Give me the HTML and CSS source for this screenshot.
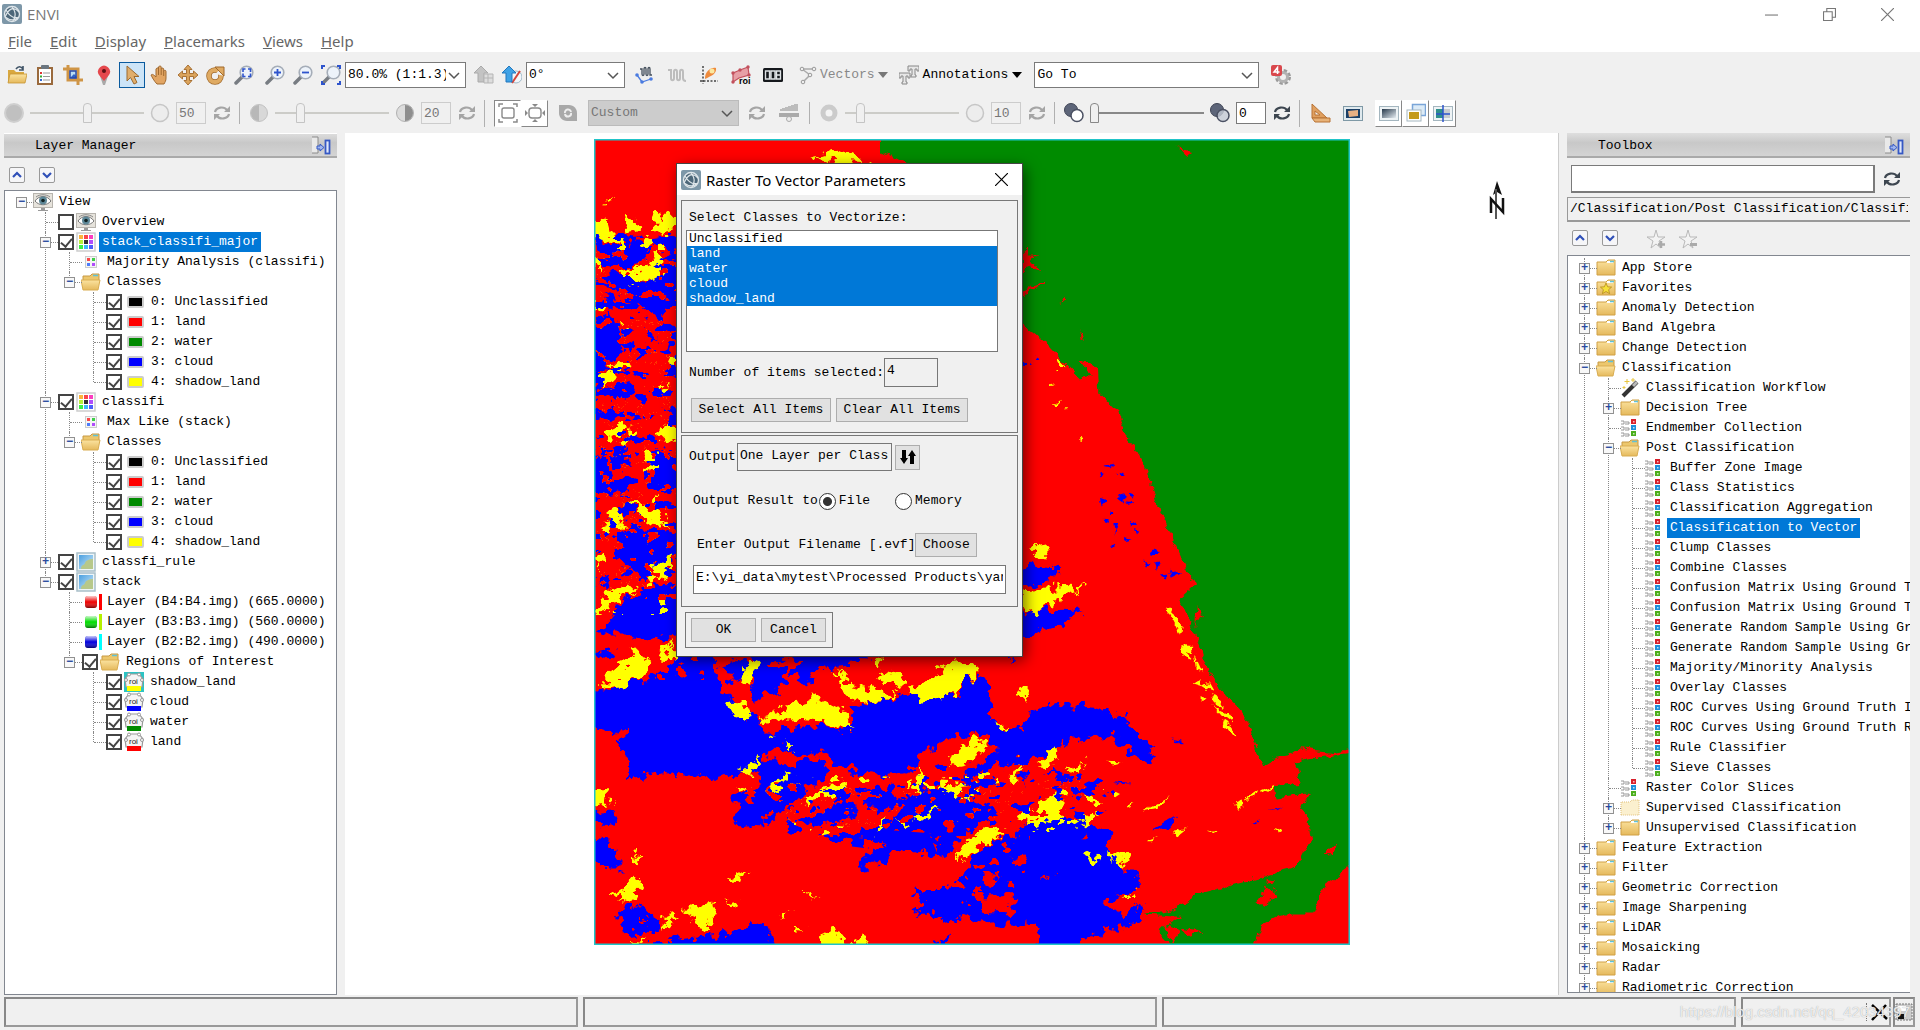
FILE: index.html
```html
<!DOCTYPE html>
<html lang="en">
<head>
<meta charset="utf-8">
<title>ENVI</title>
<link rel="stylesheet" href="styles.css">
</head>
<body>
<svg class="defs" aria-hidden="true">
  <defs>
    <linearGradient id="gold" x1="0" y1="0" x2="0" y2="1"><stop offset="0" stop-color="#fbe3a0"/><stop offset="1" stop-color="#e5b95c"/></linearGradient>
    <linearGradient id="sky" x1="0" y1="0" x2="1" y2="1"><stop offset="0" stop-color="#4a9fe0"/><stop offset="1" stop-color="#cfeaf8"/></linearGradient>
    <linearGradient id="dusk" x1="0" y1="0" x2="1" y2="1"><stop offset="0" stop-color="#26384a"/><stop offset="1" stop-color="#e6edf2"/></linearGradient>
    <linearGradient id="ball" x1="0" y1="0" x2="0" y2="1"><stop offset="0" stop-color="#fff" stop-opacity=".8"/><stop offset=".5" stop-color="#fff" stop-opacity="0"/><stop offset="1" stop-color="#000" stop-opacity=".5"/></linearGradient>
  </defs>
  <symbol id="logo" viewBox="0 0 20 20"><rect width="20" height="20" rx="2" fill="#7d97a8"/><circle cx="10" cy="10" r="7.500" fill="#4d6779" stroke="#dfe6ea" stroke-width="1.300"/><path d="M3 13C7 4 12 2 17 8M4 6c4 7 8 9 13 7M10 3c4 5 4 10 1 14M3 13c4 3 9 4 13 1" fill="none" stroke="#dfe6ea" stroke-width="1.200"/></symbol>
  <symbol id="open" viewBox="0 0 20 20"><path d="M1 17V5h6l2 2h8v10z" fill="#d9a83f"/><path d="M1 18l2-9h17l-2 9z" fill="url(#gold)" stroke="#c79534" stroke-width=".8"/><path d="M9 4c2-3 5-3 7 0M16 1v4h-4" fill="none" stroke="#3f5366" stroke-width="1.600"/></symbol>
  <symbol id="clip" viewBox="0 0 20 20"><rect x="2" y="2" width="16" height="18" fill="#9a6a3d"/><rect x="4" y="4" width="12" height="14" fill="#fff"/><rect x="6" y="0" width="8" height="4" rx="1" fill="#6b7680"/><path d="M8 8h7M8 11.500h7M8 15h7" stroke="#999"/><path d="M5 8h2" stroke="#d33" stroke-width="2"/><path d="M5 11.500h2" stroke="#3a3" stroke-width="2"/><path d="M5 15h2" stroke="#36c" stroke-width="2"/></symbol>
  <symbol id="crop" viewBox="0 0 20 20"><rect x="6" y="5" width="10" height="10" fill="#b9dcf3"/><path d="M7 13l4-4 5 5z" fill="#2e62c8"/><path d="M0 4h15v16M5 0v15h15" fill="none" stroke="#cf9546" stroke-width="3"/><path d="M7 6h6v7H7z" fill="none" stroke="#2948a8" stroke-width="1.500"/></symbol>
  <symbol id="pin" viewBox="0 0 20 20"><path d="M9 20L6 11h8l-3 9z" fill="#a9a9a9"/><path d="M10 16L5 10a6 6 0 1 1 10 0z" fill="#e5484d"/><circle cx="10" cy="6" r="2" fill="#5c1013"/></symbol>
  <symbol id="cursor" viewBox="0 0 20 20"><path d="M5 1v15l3.500-3.500L12 19l3-1.500-3-6h5z" fill="#e0ae6c" stroke="#9b6a30"/></symbol>
  <symbol id="hand" viewBox="0 0 20 20"><path d="M7 19C4 16 2 12 1 10c1-1 2-1 5 2V4c1-1.500 2-1.500 2.500 0V2c1-1.500 2.200-1.500 2.700 0v2c1-1.500 2.200-1 2.500 0v2c1-1 2.300-.8 2.300.5V13c0 3-1 4-2 6z" fill="#e2a563" stroke="#a06a30"/><path d="M8.500 4v6M11.200 4v6M13.700 6v5" stroke="#a06a30"/></symbol>
  <symbol id="move" viewBox="0 0 20 20"><path d="M10 0l4 4.500h-2.500v4h4V6L20 10l-4.500 4v-2.500h-4v4H14L10 20l-4-4.500h2.500v-4h-4V14L0 10l4.500-4v2.500h4v-4H6z" fill="#dba45c" stroke="#a1692a" stroke-width=".9"/></symbol>
  <symbol id="rotate" viewBox="0 0 20 20"><circle cx="9" cy="11" r="6" fill="none" stroke="#a1692a" stroke-width="5.500"/><circle cx="9" cy="11" r="6" fill="none" stroke="#dfaa62" stroke-width="4"/><path d="M9 9L19 0v11z" fill="#efefef"/><path d="M9 2h9v9z" fill="#dfaa62" stroke="#a1692a"/></symbol>
  <symbol id="lens" viewBox="0 0 20 20"><path d="M8 12l-6 6" stroke="#777c82" stroke-width="3.500" stroke-linecap="round"/><circle cx="12.500" cy="7.500" r="6.300" fill="#edf3fa" stroke="#a5adb8" stroke-width="1.600"/></symbol>
  <symbol id="zsel" viewBox="0 0 20 20"><use href="#lens"/><path d="M9 7V4h2.500M14 4h2.500v3M16.500 8.500v3H14M11.500 11.500H9v-3" fill="none" stroke="#2e54cc" stroke-width="1.600"/></symbol>
  <symbol id="zin" viewBox="0 0 20 20"><use href="#lens"/><path d="M9 7.500h7M12.500 4v7" stroke="#2e54cc" stroke-width="1.800"/></symbol>
  <symbol id="zout" viewBox="0 0 20 20"><use href="#lens"/><path d="M9 7.500h7" stroke="#2e54cc" stroke-width="1.800"/></symbol>
  <symbol id="zfit" viewBox="0 0 20 20"><use href="#lens"/><path d="M1 4V1h3M16 1h3v3M19 16v3h-3M4 19H1v-3" fill="none" stroke="#2e54cc" stroke-width="2"/></symbol>
  <symbol id="upgray" viewBox="0 0 20 20"><path d="M7 1l7 7h-4v9H4V8H0z" fill="#c3c3c3" stroke="#aaa"/><path d="M10 9h9v9h-9zM10 13h9M14 9v9" fill="#ddd" stroke="#b5b5b5"/></symbol>
  <symbol id="upblue" viewBox="0 0 20 20"><circle cx="14" cy="12" r="6" fill="#f3f7fa" stroke="#9fb9c9"/><path d="M10 18l8-12" stroke="#d4453a" stroke-width="2"/><path d="M7 1l7 7h-4v9H4V8H0z" fill="#3fa2e6" stroke="#2277bd"/></symbol>
  <symbol id="spec" viewBox="0 0 20 20"><path d="M5 4h2v5c0 2 2 2 2 0V4c0-2 2-2 2 0v5c0 2 2 2 2 0V4c0-2 2-2 2 0v6h2" fill="none" stroke="#444f5c" stroke-width="1.300"/><path d="M2 10l5 7 9-3" fill="none" stroke="#4a7be0" stroke-width="1.300"/><circle cx="2" cy="10" r="1.800" fill="#4a7be0"/><circle cx="7" cy="17" r="1.800" fill="#4a7be0"/><circle cx="16" cy="14" r="1.800" fill="#4a7be0"/></symbol>
  <symbol id="wave" viewBox="0 0 20 20"><path d="M1 5h3v8c0 3 3 3 3 0V7c0-3 3-3 3 0v6c0 3 3 3 3 0V7c0-3 3-3 3 0v6c0 2 1 3 3 3" fill="none" stroke="#bdbdbd" stroke-width="2"/></symbol>
  <symbol id="scat" viewBox="0 0 20 20"><path d="M4 1v18M1 16h18" stroke="#444" stroke-width="1.500" stroke-dasharray="2 1.500"/><path d="M6 14c0-8 6-12 11-11 1 6-5 8-11 11z" fill="#ee8a3c"/><circle cx="13" cy="6" r="2.500" fill="#fbe8a0"/></symbol>
  <symbol id="roi" viewBox="0 0 20 20"><path d="M2 8L9 5 17 2l1 8-10 3-6 4z" fill="#e7a0a6" stroke="#c2505c" stroke-width="1.200"/><g fill="#c2505c"><circle cx="2" cy="8" r="1.700"/><circle cx="9" cy="5" r="1.700"/><circle cx="17" cy="2" r="1.700"/><circle cx="18" cy="10" r="1.700"/><circle cx="2" cy="17" r="1.700"/></g></symbol>
  <symbol id="dn" viewBox="0 0 20 20"><rect y="3" width="20" height="14" rx="1.500" fill="#15181c"/><path d="M2.500 6h4v8h-4zM8 6h4v8H8zM13.500 6h4v8h-4zM13.500 10h4" fill="none" stroke="#dfe3e6" stroke-width="1.400"/></symbol>
  <symbol id="vect" viewBox="0 0 20 20"><path d="M4 4l8 6-7 7M4 4h13" fill="none" stroke="#aaa" stroke-width="1.500"/><g fill="#eee" stroke="#999"><circle cx="4" cy="4" r="1.800"/><circle cx="16" cy="4" r="1.800"/><circle cx="12" cy="10" r="1.800"/><circle cx="5" cy="17" r="1.800"/></g></symbol>
  <symbol id="anno" viewBox="0 0 20 20"><path d="M9 1h11v5h-2V4h-2v6h1v2h-5v-2h1V4h-2v2H9zM0 8h11v5H9v-2H7v6h1v2H3v-2h1v-6H2v2H0z" fill="#e7e7e7" stroke="#888"/></symbol>
  <symbol id="gear" viewBox="0 0 20 20"><circle cx="12" cy="12" r="6" fill="none" stroke="#9a9a9a" stroke-width="4" stroke-dasharray="3 1.700"/><circle cx="12" cy="12" r="4.500" fill="none" stroke="#b2b2b2" stroke-width="3"/><rect width="11" height="11" rx="2" fill="#d9474c"/><path d="M6.500 9V2.500L3 7h5.500" fill="none" stroke="#fff" stroke-width="1.500"/></symbol>
  <symbol id="refresh" viewBox="0 0 20 20"><path d="M3 9c1-5 9-6 12-2M17 11c-1 5-9 6-12 2" fill="none" stroke="currentColor" stroke-width="2.200"/><path d="M18 3v6h-6zM2 17v-6h6z" fill="currentColor"/></symbol>
  <symbol id="disc" viewBox="0 0 20 20"><circle cx="10" cy="10" r="9" fill="#c0c0c0" stroke="#cfcfcf" stroke-width="2"/></symbol>
  <symbol id="ring" viewBox="0 0 20 20"><circle cx="10" cy="10" r="8.500" fill="#ededed" stroke="#c6c6c6" stroke-width="1.500"/></symbol>
  <symbol id="half" viewBox="0 0 20 20"><circle cx="10" cy="10" r="8.500" fill="#d8d8d8" stroke="#c2c2c2"/><path d="M10 2a8 8 0 0 0 0 16z" fill="#b8b8b8"/></symbol>
  <symbol id="half2" viewBox="0 0 20 20"><circle cx="10" cy="10" r="8.500" fill="#dcdcdc" stroke="#b0b0b0"/><path d="M10 2a8 8 0 0 1 0 16z" fill="#8e8e8e"/></symbol>
  <symbol id="sun" viewBox="0 0 20 20"><circle cx="10" cy="10" r="6" fill="#f4f4f4" stroke="#cbcbcb" stroke-width="5"/></symbol>
  <symbol id="opq" viewBox="0 0 20 20"><circle cx="7" cy="7" r="6.500" fill="#5d6579" stroke="#3f4555"/><circle cx="13" cy="12.500" r="6" fill="#fff" stroke="#4b5163" stroke-width="1.500"/></symbol>
  <symbol id="trn" viewBox="0 0 20 20"><circle cx="7" cy="7" r="6.500" fill="#5d6579" stroke="#3f4555"/><circle cx="13" cy="12.500" r="6" fill="#c4cad6" fill-opacity=".8" stroke="#4b5163" stroke-width="1.500"/></symbol>
  <symbol id="full" viewBox="0 0 20 20"><rect x="4" y="5" width="12" height="10" rx="2" fill="none" stroke="#8a8a8a" stroke-width="1.400"/><path d="M1 4V1h4M15 1h4v3M19 16v3h-4M5 19H1v-3" fill="none" stroke="#8a8a8a" stroke-width="1.500"/></symbol>
  <symbol id="ext" viewBox="0 0 20 20"><rect x="4" y="5" width="12" height="10" rx="3" fill="none" stroke="#8a8a8a" stroke-width="1.400"/><path d="M10 4l3-3H7zM10 16l3 3H7zM3 10L0 7v6zM17 10l3-3v6z" fill="#8a8a8a"/></symbol>
  <symbol id="link" viewBox="0 0 20 20"><path d="M1 2h10c5 0 8 4 8 8v8H9c-5 0-8-4-8-8z" fill="#a9a9a9"/><path d="M7 10a3 3 0 0 1 6-1M13 10a3 3 0 0 1-6 1" fill="none" stroke="#eee" stroke-width="2"/></symbol>
  <symbol id="hist" viewBox="0 0 20 20"><path d="M1 8V6h2V5h3V4h3V3h3V2h3V1h4v7z" fill="#bcbcbc"/><path d="M0 12h20" stroke="#aaa" stroke-width="4"/><circle cx="10" cy="16" r="2.500" fill="#eee" stroke="#aaa"/></symbol>
  <symbol id="ruler" viewBox="0 0 20 20"><path d="M1 1l15 14H1zM4 8v4h5z" fill="#e0a060" stroke="#b87334" fill-rule="evenodd"/><path d="M1 15h18v4H4z" fill="#e7b278" stroke="#b87334"/></symbol>
  <symbol id="pic" viewBox="0 0 20 20"><rect x=".5" y="3.500" width="19" height="14" fill="#dfe9ee" stroke="#7f99a6"/><rect x="3" y="6" width="14" height="9" fill="#1b3f66"/><path d="M5 8l10-1v6l-9 1z" fill="#e8b083"/></symbol>
  <symbol id="v1" viewBox="0 0 20 20"><rect x=".5" y="3.500" width="19" height="14" fill="#eef3f5" stroke="#a4b6bf"/><rect x="3" y="6" width="14" height="9" fill="url(#dusk)"/></symbol>
  <symbol id="v2" viewBox="0 0 20 20"><rect x="6.500" y="1.500" width="13" height="11" fill="#dcebf7" stroke="#7aa5d8" stroke-width="1.500"/><rect x="1" y="7" width="14" height="11" fill="#fff" stroke="#a4b6bf"/><rect x="3" y="9" width="10" height="7" fill="#c49a1c"/></symbol>
  <symbol id="v3" viewBox="0 0 20 20"><rect x=".5" y="3.500" width="19" height="14" fill="#eef3f5" stroke="#a4b6bf"/><rect x="3" y="6" width="7" height="9" fill="#2f8f8c"/><rect x="10" y="6" width="7" height="9" fill="#c9ccd0"/><path d="M10 2v17M3 11h14" stroke="#2e54cc" stroke-width="1.500"/></symbol>
  <symbol id="dock" viewBox="0 0 20 20"><path d="M1 1h6v16H1" fill="#e9e9e9" stroke="#8a8a8a"/><rect x="14.500" y="4.500" width="4" height="13" fill="#dfe7fa" stroke="#3558c4" stroke-width="1.800"/><path d="M6 10h3V8l4 3.500L9 15v-2H6z" fill="#9fb5ee" stroke="#3558c4"/></symbol>
  <symbol id="eye" viewBox="0 0 20 20"><rect x=".5" y="1.500" width="19" height="14" fill="#e6e3dc" stroke="#b7b4ae"/><path d="M8 16h4v2h3v1H5v-1h3z" fill="#999"/><path d="M2 9c4-6 12-6 16 0-4 5-12 5-16 0z" fill="#fff" stroke="#777"/><circle cx="10" cy="8.500" r="4" fill="#5e8797"/><circle cx="10" cy="8.500" r="1.800" fill="#122"/><path d="M3 5c4-3 10-3 14 0" fill="none" stroke="#888"/></symbol>
  <symbol id="cls" viewBox="0 0 20 20"><rect x="1" y="1" width="18" height="18" fill="#fff" stroke="#cdcdcd" stroke-width="1.500"/><path d="M3 3h4v4H3z" fill="#fbb43c"/><path d="M8 3h4v4H8z" fill="#fb4646"/><path d="M13 3h4v4h-4z" fill="#fb3cc0"/><path d="M3 8h4v4H3z" fill="#b8f03c"/><path d="M8 8h4v4H8z" fill="#333"/><path d="M13 8h4v4h-4z" fill="#b04cfb"/><path d="M3 13h4v4H3z" fill="#3cf046"/><path d="M8 13h4v4H8z" fill="#3cb8fb"/><path d="M13 13h4v4h-4z" fill="#4c5cfb"/></symbol>
  <symbol id="cls2" viewBox="0 0 20 20"><rect x="4.500" y="4.500" width="11" height="11" fill="#f4f4f4" stroke="#cdcdcd"/><path d="M6 6h3v3H6z" fill="#fb4646"/><path d="M11 6h3v3h-3z" fill="#3cd046"/><path d="M6 11h3v3H6z" fill="#4c7cfb"/><path d="M11 11h3v3h-3z" fill="#b04cfb"/></symbol>
  <symbol id="fold" viewBox="0 0 20 20"><path d="M1 17V4h9l2-2h7v15z" fill="url(#gold)" stroke="#d0a044"/><path d="M11 4h6" stroke="#fff" stroke-width="2"/><path d="M14 3.500h4" stroke="#5fc2d8" stroke-width="1.500"/></symbol>
  <symbol id="foldpale" viewBox="0 0 20 20"><path d="M1 17V4h9l2-2h7v15z" fill="#fbf0cf" stroke="#e0bf78" stroke-dasharray="1 1"/></symbol>
  <symbol id="foldstar" viewBox="0 0 20 20"><use href="#fold"/><path d="M10 5l1.600 3.800 4 .3-3 2.600 1 4-3.600-2.200-3.600 2.200 1-4-3-2.600 4-.3z" fill="#f6e03a" stroke="#b48a1c" stroke-width=".8"/></symbol>
  <symbol id="foldo" viewBox="0 0 20 20"><path d="M2 16V4h7l2-2h7v8z" fill="#ecc76d" stroke="#c79a45"/><path d="M12 3.500h5" stroke="#5fc2d8" stroke-width="1.500"/><path d="M0 8h19l-2 10H2z" fill="url(#gold)" stroke="#d9ad52"/></symbol>
  <symbol id="ras" viewBox="0 0 20 20"><rect x="1" y="1" width="18" height="18" fill="#eef5f8" stroke="#a9bfc9" stroke-width="1.500"/><rect x="3" y="3" width="14" height="14" fill="url(#sky)"/><path d="M5 17c0-5 3-3 4-6s5-4 8-4v10z" fill="#b7c88a"/></symbol>
  <symbol id="wand" viewBox="0 0 20 20"><path d="M3 18L17 4" stroke="#333" stroke-width="4"/><path d="M13 8l4-4" stroke="#b9b9b9" stroke-width="3"/><path d="M7 1v5M4.500 3.500h5M13 0v4M11 2h4M4 8v3M2.500 9.500h3" stroke="#e8c640"/></symbol>
  <symbol id="job" viewBox="0 0 20 20"><path d="M1 3h3v3H1M5 4h4v2H5M1 9h3v3H1M5 10h4v2H5M1 15h3v3H1M5 16h4v2H5" fill="none" stroke="#8c8c8c" stroke-width=".9"/><rect x="11" y="1" width="5" height="5" fill="#d8202c"/><rect x="11" y="7" width="5" height="5" fill="#1c8fdc"/><rect x="11" y="13" width="5" height="5" fill="#4cae1c"/><path d="M13 3h1.500v1.500H13zM13 9h1.500v1.500H13zM13 15h1.500v1.500H13z" fill="#fff" opacity=".7"/></symbol>
  <symbol id="region" viewBox="0 0 20 20"><path d="M5 2l10 0 4 5-1 8H2L1 7z" fill="#f5f5f5" stroke="#999" stroke-width="1.200"/><g fill="#fff" stroke="#999"><circle cx="5" cy="2.500" r="1.500"/><circle cx="15" cy="2.500" r="1.500"/><circle cx="18" cy="8" r="1.500"/><circle cx="2" cy="8" r="1.500"/></g><rect x="3" y="14" width="14" height="5" fill="currentColor"/></symbol>
  <symbol id="band" viewBox="0 0 20 20"><rect x="4" y="4" width="12" height="12" rx="3" fill="currentColor"/><rect x="4" y="4" width="12" height="12" rx="3" fill="url(#ball)"/></symbol>
  <symbol id="star" viewBox="0 0 20 20"><path d="M10 1l2 7h7l-6 4 2 7-5-4-5 4 2-7-6-4h7z" fill="#f3f3f3" stroke="#b9b9b9"/><path d="M15 12v7M12 15.500h7" stroke="#aaa" stroke-width="2.500"/></symbol>
  <symbol id="starm" viewBox="0 0 20 20"><path d="M10 1l2 7h7l-6 4 2 7-5-4-5 4 2-7-6-4h7z" fill="#f3f3f3" stroke="#b9b9b9"/><path d="M12 15.500h7" stroke="#aaa" stroke-width="3"/></symbol>
  <symbol id="chev" viewBox="0 0 12 12"><path d="M1 4l5 5 5-5" fill="none" stroke="currentColor" stroke-width="1.500"/></symbol>
  <symbol id="up" viewBox="0 0 12 12"><path d="M2 8l4-4 4 4" fill="none" stroke="#3050b8" stroke-width="2.200"/></symbol>
  <symbol id="down" viewBox="0 0 12 12"><path d="M2 4l4 4 4-4" fill="none" stroke="#3050b8" stroke-width="2.200"/></symbol>
  <symbol id="close" viewBox="0 0 12 12"><path d="M0 0l12 12M12 0L0 12" stroke="currentColor" stroke-width="1.100"/></symbol>
  <symbol id="max" viewBox="0 0 12 12"><path d="M.5 3.500h8v8h-8zM3.500 3V.5h8v8H9" fill="none" stroke="currentColor"/></symbol>
  <symbol id="min" viewBox="0 0 12 12"><path d="M0 6.500h12" stroke="currentColor"/></symbol>
</svg>

<header class="titlebar">
  <svg class="i20"><use href="#logo"/></svg><h1>ENVI</h1>
  <div class="winbtns">
    <button aria-label="Minimize"><svg><use href="#min"/></svg></button>
    <button aria-label="Restore"><svg><use href="#max"/></svg></button>
    <button aria-label="Close"><svg><use href="#close"/></svg></button>
  </div>
</header>
<nav class="menubar">
  <button><u>F</u>ile</button><button><u>E</u>dit</button><button><u>D</u>isplay</button><button><u>P</u>lacemarks</button><button><u>V</u>iews</button><button><u>H</u>elp</button>
</nav>

<section class="tools">
  <div class="bar main-tools">
    <div class="grp"><button aria-label="Open"><svg><use href="#open"/></svg></button><button aria-label="Data Manager"><svg><use href="#clip"/></svg></button><button aria-label="Crop"><svg><use href="#crop"/></svg></button></div>
    <div class="grp"><button aria-label="Placemark"><svg><use href="#pin"/></svg></button><button class="on" aria-label="Select"><svg><use href="#cursor"/></svg></button><button aria-label="Pan"><svg><use href="#hand"/></svg></button><button aria-label="Fly"><svg><use href="#move"/></svg></button><button aria-label="Rotate"><svg><use href="#rotate"/></svg></button><button aria-label="Zoom"><svg><use href="#zsel"/></svg></button></div>
    <div class="grp"><button aria-label="Zoom in"><svg><use href="#zin"/></svg></button><button aria-label="Zoom out"><svg><use href="#zout"/></svg></button><button aria-label="Zoom to extent"><svg><use href="#zfit"/></svg></button></div>
    <div class="combo scale"><select aria-label="Scale"><option>80.0% (1:1.3)</option></select><svg><use href="#chev"/></svg></div>
    <div class="grp north"><button aria-label="Rotate to top" disabled><svg><use href="#upgray"/></svg></button><button aria-label="North up"><svg><use href="#upblue"/></svg></button></div>
    <div class="combo angle"><select aria-label="Angle"><option>0°</option></select><svg><use href="#chev"/></svg></div>
    <div class="grp wide"><button aria-label="Spectral profile"><svg><use href="#spec"/></svg></button><button aria-label="Arbitrary profile" disabled><svg><use href="#wave"/></svg></button><button aria-label="Scatter plot"><svg><use href="#scat"/></svg></button><button aria-label="Region of interest"><svg viewBox="0 0 20 20"><use href="#roi"/><text class="roi-b" x="8" y="19">roi</text></svg></button><button aria-label="Cursor value"><svg><use href="#dn"/></svg></button></div>
    <button class="drop off" disabled><svg><use href="#vect"/></svg>Vectors<i></i></button>
    <button class="drop note"><svg><use href="#anno"/></svg>Annotations<i></i></button>
    <div class="combo goto"><select aria-label="Go To"><option>Go To</option></select><svg><use href="#chev"/></svg></div>
    <div class="grp last"><button aria-label="Notifications"><svg><use href="#gear"/></svg></button></div>
  </div>
  <div class="bar sub-tools">
    <div class="adj off"><svg><use href="#disc"/></svg><input type="range" aria-label="Brightness" value="50" disabled><svg><use href="#ring"/></svg><input class="num" aria-label="Brightness value" value="50" disabled><svg><use href="#refresh"/></svg></div>
    <div class="adj off"><svg><use href="#half"/></svg><input type="range" aria-label="Contrast" value="20" disabled><svg><use href="#half2"/></svg><input class="num" aria-label="Contrast value" value="20" disabled><svg><use href="#refresh"/></svg></div>
    <div class="adj stretch off">
      <div class="pair"><button aria-label="Full extent"><svg><use href="#full"/></svg></button><button aria-label="View extent"><svg><use href="#ext"/></svg></button></div>
      <svg class="lk"><use href="#link"/></svg>
      <div class="combo custom"><select aria-label="Stretch" disabled><option>Custom</option></select><svg><use href="#chev"/></svg></div>
      <svg><use href="#refresh"/></svg><svg class="hs"><use href="#hist"/></svg>
    </div>
    <div class="adj off"><svg><use href="#sun"/></svg><input type="range" aria-label="Sharpen" value="10" disabled><svg><use href="#ring"/></svg><input class="num" aria-label="Sharpen value" value="10" disabled><svg><use href="#refresh"/></svg></div>
    <div class="adj"><svg><use href="#opq"/></svg><input type="range" aria-label="Transparency" value="0"><svg><use href="#trn"/></svg><input class="num" aria-label="Transparency value" value="0"><svg><use href="#refresh"/></svg></div>
    <div class="adj tail"><svg><use href="#ruler"/></svg><svg><use href="#pic"/></svg>
      <div class="pair raised"><button aria-label="Blend"><svg><use href="#v1"/></svg></button><button aria-label="Flicker"><svg><use href="#v2"/></svg></button><button aria-label="Swipe"><svg><use href="#v3"/></svg></button></div></div>
  </div>
</section>

<main>
  <aside class="panel layers">
    <h2>Layer Manager<svg><use href="#dock"/></svg></h2>
    <div class="mini"><button aria-label="Collapse all"><svg><use href="#up"/></svg></button><button aria-label="Expand all"><svg><use href="#down"/></svg></button></div>
    <ul class="tree">
      <li><div class="row"><button class="ex">−</button><svg><use href="#eye"/></svg><span>View</span></div>
        <ul>
          <li><div class="row"><label><input type="checkbox"><svg><use href="#eye"/></svg><span>Overview</span></label></div></li>
          <li><div class="row"><button class="ex">−</button><label><input type="checkbox" checked><svg><use href="#cls"/></svg><span class="sel">stack_classifi_major</span></label></div>
            <ul>
              <li><div class="row"><svg><use href="#cls2"/></svg><span>Majority Analysis (classifi)</span></div></li>
              <li><div class="row"><button class="ex">−</button><svg><use href="#foldo"/></svg><span>Classes</span></div>
                <ul>
                  <li><div class="row"><label><input type="checkbox" checked><i class="sw k"></i><span>0: Unclassified</span></label></div></li>
                  <li><div class="row"><label><input type="checkbox" checked><i class="sw r"></i><span>1: land</span></label></div></li>
                  <li><div class="row"><label><input type="checkbox" checked><i class="sw g"></i><span>2: water</span></label></div></li>
                  <li><div class="row"><label><input type="checkbox" checked><i class="sw b"></i><span>3: cloud</span></label></div></li>
                  <li><div class="row"><label><input type="checkbox" checked><i class="sw y"></i><span>4: shadow_land</span></label></div></li>
                </ul></li>
            </ul></li>
          <li><div class="row"><button class="ex">−</button><label><input type="checkbox" checked><svg><use href="#cls"/></svg><span>classifi</span></label></div>
            <ul>
              <li><div class="row"><svg><use href="#cls2"/></svg><span>Max Like (stack)</span></div></li>
              <li><div class="row"><button class="ex">−</button><svg><use href="#foldo"/></svg><span>Classes</span></div>
                <ul>
                  <li><div class="row"><label><input type="checkbox" checked><i class="sw k"></i><span>0: Unclassified</span></label></div></li>
                  <li><div class="row"><label><input type="checkbox" checked><i class="sw r"></i><span>1: land</span></label></div></li>
                  <li><div class="row"><label><input type="checkbox" checked><i class="sw g"></i><span>2: water</span></label></div></li>
                  <li><div class="row"><label><input type="checkbox" checked><i class="sw b"></i><span>3: cloud</span></label></div></li>
                  <li><div class="row"><label><input type="checkbox" checked><i class="sw y"></i><span>4: shadow_land</span></label></div></li>
                </ul></li>
            </ul></li>
          <li><div class="row"><button class="ex">+</button><label><input type="checkbox" checked><svg><use href="#ras"/></svg><span>classfi_rule</span></label></div></li>
          <li><div class="row"><button class="ex">−</button><label><input type="checkbox" checked><svg><use href="#ras"/></svg><span>stack</span></label></div>
            <ul>
              <li><div class="row bandrow r"><svg><use href="#band"/></svg><span>Layer (B4:B4.img) (665.0000)</span></div></li>
              <li><div class="row bandrow g"><svg><use href="#band"/></svg><span>Layer (B3:B3.img) (560.0000)</span></div></li>
              <li><div class="row bandrow b"><svg><use href="#band"/></svg><span>Layer (B2:B2.img) (490.0000)</span></div></li>
              <li><div class="row"><button class="ex">−</button><label><input type="checkbox" checked><svg><use href="#foldo"/></svg><span>Regions of Interest</span></label></div>
                <ul>
                  <li><div class="row"><label><input type="checkbox" checked><svg class="reg y act" viewBox="0 0 20 20"><use href="#region"/><text x="5" y="12">roi</text></svg><span>shadow_land</span></label></div></li>
                  <li><div class="row"><label><input type="checkbox" checked><svg class="reg b" viewBox="0 0 20 20"><use href="#region"/><text x="5" y="12">roi</text></svg><span>cloud</span></label></div></li>
                  <li><div class="row"><label><input type="checkbox" checked><svg class="reg g" viewBox="0 0 20 20"><use href="#region"/><text x="5" y="12">roi</text></svg><span>water</span></label></div></li>
                  <li><div class="row"><label><input type="checkbox" checked><svg class="reg r" viewBox="0 0 20 20"><use href="#region"/><text x="5" y="12">roi</text></svg><span>land</span></label></div></li>
                </ul></li>
            </ul></li>
        </ul></li>
    </ul>
  </aside>

  <section class="view">
    <svg class="map" viewBox="594 139 756 806" role="img" aria-label="Classified raster">
      <defs>
        <filter id="rag" x="0" y="0" width="1" height="1"><feTurbulence type="fractalNoise" baseFrequency=".1" numOctaves="3" seed="7"/><feDisplacementMap in="SourceGraphic" scale="20" xChannelSelector="R" yChannelSelector="G"/></filter>
        <filter id="rag2" x="0" y="0" width="1" height="1"><feTurbulence type="fractalNoise" baseFrequency=".12" numOctaves="3" seed="3"/><feDisplacementMap in="SourceGraphic" scale="9" xChannelSelector="R" yChannelSelector="G"/></filter>
        <filter id="dots" x="0" y="0" width="1" height="1"><feTurbulence type="fractalNoise" baseFrequency=".06 .09" numOctaves="3" seed="11"/><feColorMatrix values="0 0 0 0 0 0 0 0 0 0 0 0 0 0 0 60 0 0 0 -37"/><feComposite in="SourceGraphic" operator="in"/></filter>
        <filter id="dots2" x="0" y="0" width="1" height="1"><feTurbulence type="fractalNoise" baseFrequency=".07 .1" numOctaves="3" seed="29"/><feColorMatrix values="0 0 0 0 0 0 0 0 0 0 0 0 0 0 0 60 0 0 0 -38"/><feComposite in="SourceGraphic" operator="in"/></filter>
      </defs>
      <path d="M594 139h756v806H594z" fill="#f00"/>
      <g filter="url(#rag)">
        <path d="M560 100h830v880H560z" fill="#f00"/>
        <g transform="translate(590 130) scale(.3333 .3448)">
          <path fill="#00f" d="M20 320L60 330 110 350 130 310 180 330 180 370 120 400 80 400 50 380 25 350zM40 410L80 420 160 450 220 400 290 400 290 480 220 500 230 570 170 530 100 480 40 440zM205 310L240 300 290 330 240 370zM0 560L50 530 80 560 110 620 70 660 50 690 20 780 0 700zM50 755L120 730 140 760 70 780zM0 800L45 820 0 845zM0 920L45 960 90 1050 0 1075zM65 930L110 925 120 970 70 980zM175 1000L200 930 290 950 290 1010 220 1060 175 1040zM80 1180L130 1150 250 1170 290 1220 200 1270 150 1310 90 1240zM25 1310L60 1290 50 1340zM80 1090L130 1080 130 1120 90 1120zM60 1420L120 1350 200 1320 290 1330 290 1470 180 1480 100 1460 20 1460zM0 1520L80 1500 70 1530zM35 470L90 500 60 520zM160 560L210 610 170 600zM110 620L150 630 120 650zM60 800L90 810 70 830zM230 810L290 830 240 860z"/>
          <path fill="#ff0" d="M0 270L50 265 60 300 100 300 100 340 50 320 0 310zM105 250L140 270 160 290 110 300zM185 290L210 240 290 240 290 280 200 300zM85 410L150 400 190 380 200 350 225 370 220 415 150 445 100 430zM0 350L45 400 0 405zM0 500L45 505 30 530 0 525zM90 560L120 570 95 585zM35 710L80 670 115 680 60 730 40 755zM200 755L230 735 225 765zM40 880L100 850 130 880 110 920 90 890 50 910zM190 880L240 850 290 890 230 915zM160 930L210 940 200 960 170 1000zM40 1160L70 1090 90 1130 115 1155 50 1160zM110 1080L180 1090 190 1060 205 1110 250 1155 180 1135zM0 1235L45 1240 20 1280zM165 1270L240 1240 240 1290 180 1320zM0 1400L80 1320 150 1320 80 1370 30 1410zM80 1560L130 1510 180 1530 160 1590 80 1590zM200 1500L250 1480 230 1520zM230 660L290 650 250 690zM45 195L80 205 50 210z"/>
        </g>
        <g transform="translate(590 640) scale(.3571)">
          <path fill="#00f" d="M-30 130L60 140 100 115 160 110 230 75 250 20 350 20 355 110 385 160 440 200 480 235 500 260 560 250 610 240 650 235 720 255 740 215 735 180 780 175 830 170 880 150 960 160 1040 150 1050 115 1090 90 1120 130 1125 180 1120 220 1160 250 1210 245 1230 205 1290 170 1340 185 1420 190 1500 215 1510 240 1555 290 1580 310 1568 350 1500 300 1460 265 1400 275 1330 280 1290 310 1230 335 1180 340 1120 360 1060 400 1040 380 1070 350 1130 320 1150 300 1100 270 1020 260 1000 285 930 315 915 350 870 370 800 378 740 370 690 335 650 310 600 325 520 300 490 325 470 350 430 370 370 375 330 388 280 370 240 390 220 368 160 378 110 388 105 340 75 285 115 240 70 262 30 250 -30 235zM450 20L545 20 550 120 510 150 470 170 445 150 460 110zM560 20L780 20 780 60 690 75 640 90 610 130 565 100zM365 70L430 55 440 100 400 120zM395 445L460 420 480 380 440 375 470 340 560 345 640 330 670 365 640 400 600 420 580 450 540 480 500 520 410 515 420 470zM570 510L640 470 740 460 750 490 660 520zM730 550L800 520 870 490 900 440 920 410 1000 430 1110 460 1120 500 1060 530 1020 590 980 605 900 590 850 600 770 640 750 640 770 600 820 570 740 560zM750 420L840 410 880 460 800 480zM920 700L1000 700 1040 660 1090 590 1150 560 1200 540 1250 510 1330 490 1410 520 1470 540 1440 580 1480 630 1540 660 1530 700 1450 730 1480 770 1550 740 1545 790 1490 800 1430 820 1350 860 1300 885 1235 885 1260 830 1250 800 1180 790 1110 800 1060 780 980 795 1000 770 905 765 940 740 905 710zM1350 410L1405 410 1390 440 1350 430zM1280 370L1340 380 1320 405zM1205 370L1230 365 1215 420zM955 860L1000 830 995 860zM130 870L170 845 280 835 390 825 440 795 500 800 515 860 490 900 430 880 430 950 145 950zM80 760L130 740 190 780 200 810 100 825zM0 480L60 475 75 505 30 525zM-20 550L60 560 70 600 95 640 60 640 -20 630zM650 890L760 890 800 950 640 950z"/>
          <path fill="#f00" d="M1090 715L1195 715 1180 765 1110 765zM1100 660L1145 665 1130 690zM1180 610L1220 600 1210 640zM1265 670L1300 650 1280 675zM1380 540L1400 540 1380 560zM130 780L160 775 150 790z"/>
          <path fill="#ff0" d="M40 100L90 60 170 35 150 85 90 130 40 135zM195 50L235 10 240 55zM440 60L470 50 450 125 430 110zM385 175L450 180 440 220 400 210zM475 215L560 190 630 160 700 195 735 245 700 245 640 225 570 220 480 235zM690 80L720 100 740 130 850 150 830 170 760 175 715 150zM800 110L830 85 890 110 870 135zM885 145L950 110 1030 60 1090 80 1020 150 930 170zM790 60L820 45 810 80zM1195 135L1240 145 1220 170zM415 365L470 320 460 385zM500 410L555 375 530 430zM600 445L650 415 720 400 715 430 640 440 610 465zM960 400L1095 410 1060 450 1000 435zM1010 330L1080 275 1120 290 1060 340 1015 350zM1255 355L1295 300 1310 340zM1335 360L1390 335 1365 375zM1190 490L1250 460 1320 415 1330 490 1260 525 1200 505zM1065 550L1130 515 1155 550 1090 590 1010 625 1045 580zM1365 500L1430 485 1380 525zM1440 595L1520 610 1480 630zM1385 595L1435 620 1400 630zM-20 415L50 415 55 455 -20 465zM45 710L100 700 110 660 145 675 115 740zM265 745L350 735 335 815 300 805zM200 825L215 765 245 785zM645 830L690 810 710 860 770 830 780 900 740 895 650 880zM595 890L650 875 640 905zM0 865L50 875 40 905zM380 670L435 645 420 685zM375 735L415 725 410 745zM900 485L980 475 930 515zM795 535L830 495 815 545zM900 415L935 345 925 420zM1175 390L1210 335 1195 390zM410 410L450 420 420 430zM120 600L145 605 130 620zM605 705L640 715 615 720zM530 780L560 760 545 780zM570 800L600 810 575 820zM120 840L150 845 125 860zM1500 720L1530 700 1520 720zM850 505L900 515 880 525zM500 265L520 265 505 275zM540 290L580 305 550 305zM1130 240L1185 235 1150 250z"/>
        </g>
        <g transform="translate(1000 130) scale(.3333 .523)">
          <path fill="#00f" d="M30 830L120 835 185 840 120 870 30 880zM30 920L160 920 260 916 200 940 130 955 40 975zM30 1010L45 1010 40 1020z"/>
          <path fill="#ff0" d="M90 800L160 795 120 820zM40 885L110 880 245 873 180 898 110 922 40 905zM160 438L200 455 175 455z"/>
        </g>
        <path fill="#ff0" d="M812 156l20-6 25 6 10 8-30-1z"/>
      </g>
      <path fill="#00f" filter="url(#dots)" d="M596 230l30-10 20 20 40-6v346h-90zM730 800l60-24 90 10 70-26 90 20 60-10 20 30-40 30-60 10-50-16-90 26-80-10zM1000 340l20 0 20 20-10 20z"/>
      <path fill="#ff0" filter="url(#dots2)" d="M596 235h90v380h-90zM740 790l80-20 100 10 140-16 60 30-60 40-160-16-90 20z"/>
      <path fill="#f00" filter="url(#dots2)" d="M594 250h90v350h-90zM594 656h110v24H594zM760 656l180 4-20 30-140-6zM730 780l200 10 160-16-10 40-140 20-180-14zM930 836l100 0-10 70-60 0z"/>
      <g filter="url(#rag2)">
        <g transform="translate(1000 130) scale(.3333 .523)">
          <path fill="#008b00" d="M-360 -20L1080 -20 1080 1180 1000 1190 900 1182 870 1195 830 1200 790 1215 760 1170 745 1130 720 1110 660 1070 620 1030 600 985 575 950 540 895 585 870 545 820 510 770 470 710 435 645 410 610 375 585 355 540 295 500 290 450 240 440 275 470 240 475 200 450 140 410 66 370 0 330 -200 90 -360 40zM1080 1188L880 1208 905 1250 820 1255 830 1278 930 1270 900 1298 920 1305 930 1360 890 1410 750 1435 600 1460 520 1490 430 1500 550 1505 470 1530 560 1590 750 1590 780 1520 840 1500 940 1500 980 1440 1080 1395z"/>
          <path fill="#f00" d="M530 33L575 45 560 52zM66 235L85 225 80 240 105 240 90 250 118 272 85 262 66 272zM66 310L90 300 135 290 125 298 85 308 70 320zM970 1385L1010 1362 1005 1385zM770 1475L800 1445 835 1462 790 1485zM590 910L605 930 590 950zM490 1520L540 1530 520 1555zM240 378L252 400 245 402zM800 1430L830 1435 800 1440zM545 1525L610 1532 560 1540zM180 335L195 318 198 325z"/>
          <path fill="#ff0" d="M498 913L515 917 545 950 540 965zM540 985L560 990 580 990 575 1002 555 998 575 1012 545 1005zM585 1005L610 1040 590 1028zM575 1060L605 1048 600 1062 625 1058 640 1075 615 1068zM630 1078L660 1090 672 1105 640 1092zM605 1080L620 1088 605 1090zM640 1100L690 1115 700 1135 665 1118zM660 1128L690 1140 712 1158 690 1155zM705 1285L725 1280 730 1292 715 1298zM735 1280L775 1262 765 1275zM780 1262L822 1252 815 1258 790 1268zM425 1303L510 1275 470 1298zM515 1342L560 1337 540 1347zM435 1360L470 1352 460 1360zM380 1295L400 1287 390 1298zM315 1208L365 1209 340 1213zM620 1340L658 1339 640 1344zM825 1335L840 1340 830 1345zM150 485L160 490 150 492zM155 518L180 520 170 526zM190 530L205 530 200 533zM240 585L250 592 242 595z"/>
          <path fill="#00f" d="M460 1337L530 1312 500 1335zM510 1165L548 1170 540 1175zM340 1245L390 1248 360 1252zM300 655L315 658 305 668zM310 642L345 638 330 645zM350 655L375 660 360 664zM300 705L320 710 305 722zM355 695L375 700 370 712 355 705zM390 695L408 700 395 705zM330 725L348 732 335 738zM385 745L405 750 395 758zM340 750L355 750 345 775zM305 745L325 746 310 752zM370 780L395 783 375 786zM405 765L418 768 410 774zM325 790L340 792 335 797zM375 710L405 712 385 716zM455 800L480 805 455 815zM430 825L450 830 440 838zM480 852L505 850 490 862zM510 840L540 848 515 856zM465 822L480 830 470 838zM755 1325L780 1318 765 1330zM800 1302L850 1295 830 1300z"/>
        </g>
      </g>
      <path d="M594.500 139.500h755v805h-755z" fill="none" stroke="#20c4c8" stroke-width="2"/>
    </svg>
    <svg class="compass" viewBox="0 0 20 40" role="img" aria-label="North"><path d="M10 0l5 14-5-3-4 3z" fill="#111"/><path d="M9 8v30" stroke="#555" stroke-width="2"/><path d="M4 32V18l12 13V17" fill="none" stroke="#111" stroke-width="2.500"/></svg>

    <form class="dialog" aria-label="Raster To Vector Parameters">
      <header><svg class="i20"><use href="#logo"/></svg><h2>Raster To Vector Parameters</h2><button type="button" aria-label="Close"><svg><use href="#close"/></svg></button></header>
      <fieldset class="f1">
        <label for="cl">Select Classes to Vectorize:</label>
        <select id="cl" multiple size="8"><option>Unclassified</option><option selected>land</option><option selected>water</option><option selected>cloud</option><option selected>shadow_land</option></select>
        <div class="line"><label for="n">Number of items selected:</label><input id="n" class="count" value="4" readonly></div>
        <div class="line btns"><button type="button">Select All Items</button><button type="button">Clear All Items</button></div>
      </fieldset>
      <fieldset class="f2">
        <div class="line out"><label for="o">Output</label><input id="o" value="One Layer per Class" readonly><button type="button" aria-label="Switch output"><svg viewBox="0 0 18 16"><path d="M3 1h4v8h2l-4 6-4-6h2zM11 15h4V7h2l-4-6-4 6h2z"/></svg></button></div>
        <div class="line res"><span>Output Result to</span><label><input type="radio" name="to" checked>File</label><label class="mem"><input type="radio" name="to">Memory</label></div>
        <div class="line fn"><label for="f">Enter Output Filename [.evf]</label><button type="button">Choose</button></div>
        <input id="f" class="path" value="E:\yi_data\mytest\Processed Products\yanshi">
      </fieldset>
      <div class="okbox"><button type="button">OK</button><button type="button">Cancel</button></div>
    </form>
  </section>

  <aside class="panel toolbox">
    <h2>Toolbox<svg><use href="#dock"/></svg></h2>
    <div class="search"><input aria-label="Search the toolbox"><svg><use href="#refresh"/></svg></div>
    <input class="where" aria-label="Tool path" value="/Classification/Post Classification/Classification to Vector" readonly>
    <div class="mini"><button aria-label="Collapse all"><svg><use href="#up"/></svg></button><button aria-label="Expand all"><svg><use href="#down"/></svg></button><svg class="st first"><use href="#star"/></svg><svg class="st"><use href="#starm"/></svg></div>
    <ul class="tree">
      <li><div class="row"><button class="ex">+</button><svg><use href="#fold"/></svg><span>App Store</span></div></li>
      <li><div class="row"><button class="ex">+</button><svg><use href="#foldstar"/></svg><span>Favorites</span></div></li>
      <li><div class="row"><button class="ex">+</button><svg><use href="#fold"/></svg><span>Anomaly Detection</span></div></li>
      <li><div class="row"><button class="ex">+</button><svg><use href="#fold"/></svg><span>Band Algebra</span></div></li>
      <li><div class="row"><button class="ex">+</button><svg><use href="#fold"/></svg><span>Change Detection</span></div></li>
      <li><div class="row"><button class="ex">−</button><svg><use href="#foldo"/></svg><span>Classification</span></div>
        <ul>
          <li><div class="row"><svg><use href="#wand"/></svg><span>Classification Workflow</span></div></li>
          <li><div class="row"><button class="ex">+</button><svg><use href="#fold"/></svg><span>Decision Tree</span></div></li>
          <li><div class="row"><svg><use href="#job"/></svg><span>Endmember Collection</span></div></li>
          <li><div class="row"><button class="ex">−</button><svg><use href="#foldo"/></svg><span>Post Classification</span></div>
            <ul>
              <li><div class="row"><svg><use href="#job"/></svg><span>Buffer Zone Image</span></div></li>
              <li><div class="row"><svg><use href="#job"/></svg><span>Class Statistics</span></div></li>
              <li><div class="row"><svg><use href="#job"/></svg><span>Classification Aggregation</span></div></li>
              <li><div class="row"><svg><use href="#job"/></svg><span class="sel">Classification to Vector</span></div></li>
              <li><div class="row"><svg><use href="#job"/></svg><span>Clump Classes</span></div></li>
              <li><div class="row"><svg><use href="#job"/></svg><span>Combine Classes</span></div></li>
              <li><div class="row"><svg><use href="#job"/></svg><span>Confusion Matrix Using Ground Truth Image</span></div></li>
              <li><div class="row"><svg><use href="#job"/></svg><span>Confusion Matrix Using Ground Truth ROIs</span></div></li>
              <li><div class="row"><svg><use href="#job"/></svg><span>Generate Random Sample Using Ground Truth Image</span></div></li>
              <li><div class="row"><svg><use href="#job"/></svg><span>Generate Random Sample Using Ground Truth ROIs</span></div></li>
              <li><div class="row"><svg><use href="#job"/></svg><span>Majority/Minority Analysis</span></div></li>
              <li><div class="row"><svg><use href="#job"/></svg><span>Overlay Classes</span></div></li>
              <li><div class="row"><svg><use href="#job"/></svg><span>ROC Curves Using Ground Truth Image</span></div></li>
              <li><div class="row"><svg><use href="#job"/></svg><span>ROC Curves Using Ground Truth ROIs</span></div></li>
              <li><div class="row"><svg><use href="#job"/></svg><span>Rule Classifier</span></div></li>
              <li><div class="row"><svg><use href="#job"/></svg><span>Sieve Classes</span></div></li>
            </ul></li>
          <li><div class="row"><svg><use href="#job"/></svg><span>Raster Color Slices</span></div></li>
          <li><div class="row"><button class="ex">+</button><svg><use href="#foldpale"/></svg><span>Supervised Classification</span></div></li>
          <li><div class="row"><button class="ex">+</button><svg><use href="#fold"/></svg><span>Unsupervised Classification</span></div></li>
        </ul></li>
      <li><div class="row"><button class="ex">+</button><svg><use href="#fold"/></svg><span>Feature Extraction</span></div></li>
      <li><div class="row"><button class="ex">+</button><svg><use href="#fold"/></svg><span>Filter</span></div></li>
      <li><div class="row"><button class="ex">+</button><svg><use href="#fold"/></svg><span>Geometric Correction</span></div></li>
      <li><div class="row"><button class="ex">+</button><svg><use href="#fold"/></svg><span>Image Sharpening</span></div></li>
      <li><div class="row"><button class="ex">+</button><svg><use href="#fold"/></svg><span>LiDAR</span></div></li>
      <li><div class="row"><button class="ex">+</button><svg><use href="#fold"/></svg><span>Mosaicking</span></div></li>
      <li><div class="row"><button class="ex">+</button><svg><use href="#fold"/></svg><span>Radar</span></div></li>
      <li><div class="row"><button class="ex">+</button><svg><use href="#fold"/></svg><span>Radiometric Correction</span></div></li>
      <li></li>
    </ul>
  </aside>
</main>

<footer class="status">
  <div class="cell"></div><div class="cell"></div><div class="cell"></div>
  <div class="cell task"><button aria-label="Cancel task"><svg viewBox="0 0 18 18"><path d="M1 2l15 14M15 2L1 17" stroke="#000" stroke-width="2.500"/></svg></button></div>
  <div class="cell grip"><svg viewBox="0 0 18 18"><rect x="1" y="1" width="16" height="16" fill="#ccc" stroke="#777" stroke-dasharray="2 1"/><path d="M3 3h8v5H3z" fill="#fff"/><path d="M3 11h6v5H3z" fill="#111"/></svg></div>
  <p class="mark">https://blog.csdn.net/qq_42034397</p>
</footer>
</body>
</html>
```
FILE: styles.css
```css
* { box-sizing: border-box; }
html, body { height: 100%; }
body {
  margin: 0;
  display: flex;
  flex-direction: column;
  overflow: hidden;
  background: #f0f0f0;
  color: #000;
  font: 13px/20px "Liberation Mono", monospace;
}
button, input, select { font: inherit; color: inherit; margin: 0; border-radius: 0; }
button { padding: 0; border: 0; background: none; }
svg { display: block; flex: none; width: 20px; height: 20px; }
ul { list-style: none; margin: 0; padding: 0; }
h1, h2, p { margin: 0; font-weight: normal; font-size: inherit; }
.defs { position: absolute; width: 0; height: 0; }

/* window frame */
.titlebar {
  display: flex; align-items: center; gap: 5px;
  height: 28px; padding: 0 4px 0 2px;
  background: #fff; color: #777;
  font: 15px/20px "Open Sans", sans-serif;
}
.winbtns { display: flex; margin-left: auto; }
.winbtns button { width: 58px; height: 28px; display: grid; place-items: center; }
.winbtns svg { width: 13px; height: 13px; }
.menubar { display: flex; gap: 18px; height: 24px; padding-left: 8px; background: #fff; }
.menubar button { font: 15px/26px "Noto Sans", sans-serif; color: #666; }

/* toolbars */
.tools { height: 81px; }
.bar { display: flex; align-items: center; }
.main-tools { height: 46px; padding-left: 3px; }
.grp { display: flex; }
.grp + .grp { margin-left: 3px; }
.grp button { width: 28px; height: 26px; display: grid; place-items: center; }
.grp button.on { width: 26px; margin: 0 1px; background: #cce4f7; border: 1px solid #0a5a9e; }
.grp.north { margin-left: 4px; }
.grp.wide { gap: 4px; margin-left: 6px; }
.grp.last { margin-left: 8px; }
.roi-b { font: bold 9px "Liberation Sans", sans-serif; }
.combo { display: flex; align-items: center; height: 26px; border: 1px solid #7a7a7a; background: #fff; padding-right: 5px; }
.combo select { appearance: none; flex: 1; min-width: 0; border: 0; background: none; padding: 0 2px; line-height: 18px; overflow: hidden; opacity: 1; }
.combo svg { width: 12px; height: 12px; color: #555; }
.scale { width: 121px; }
.angle { width: 99px; }
.goto { width: 225px; margin-left: 12px; }
.drop { display: flex; align-items: center; gap: 2px; margin-left: 11px; }
.drop.note { gap: 4px; }
.drop i { border: 5px solid transparent; border-top: 6px solid #000; border-bottom: 0; margin-left: 1px; }
.drop.note i { margin-left: 0; }
.drop.off { color: #888; }
.drop.off i { border-top-color: #777; }
.sub-tools { height: 30px; padding-left: 4px; }
.adj { display: flex; align-items: center; gap: 6px; color: #3d4650; }
.adj.off { color: #a5a5a5; }
.adj + .adj { margin-left: 7px; padding-left: 9px; border-left: 1px solid #b0b0b0; }
.num { width: 30px; height: 22px; border: 1px solid #7a7a7a; background: #fff; padding: 0 2px; color: #000; }
.num:disabled { border-color: #ccc; background: #f0f0f0; color: #777; }
input[type="range"] { appearance: none; width: 114px; height: 20px; background: linear-gradient(#888, #888) center / 100% 2px no-repeat; }
input[type="range"]:disabled { background-image: linear-gradient(#ccccc8, #ccccc8); }
input[type="range"]::-webkit-slider-thumb {
  appearance: none; width: 9px; height: 20px;
  background: #f0f0f0; border: 1px solid #888; border-radius: 4px 4px 0 0;
}
input[type="range"]:disabled::-webkit-slider-thumb { border-color: #c4c4c4; }
.pair { display: flex; }
.pair button { width: 27px; height: 27px; display: grid; place-items: center; background: #fff; border: 1px solid #fff; border-right-color: #888; border-bottom-color: #888; }
.stretch .pair button:first-child { border-color: #888 #fff #fff #888; }
.lk { margin: 0 2px; }
.custom { width: 151px; background: #ccc; border-color: #bbb; color: #777; }
.stretch { gap: 8px; }
.hs { margin: 0 3px 0 4px; }
.tail { gap: 12px; }
.tail > svg:first-child { margin-left: 2px; }

/* main columns */
main { flex: 1; min-height: 0; display: flex; gap: 8px; padding: 0 10px 0 4px; }
.panel { flex: none; display: flex; flex-direction: column; min-height: 0; }
.layers { width: 333px; }
.toolbox { width: 343px; }
.panel h2 {
  display: flex; justify-content: space-between; align-items: center;
  height: 25px; flex: none; padding: 2px 6px 0 31px;
  background: linear-gradient(#dcdcdc, #c8c8c8 40%, #d4d4d4);
  border-bottom: 2px solid #aaa; border-top: 1px solid #fff;
}
.mini { display: flex; gap: 14px; padding: 9px 5px 7px; flex: none; }
.mini button { width: 16px; height: 16px; border: 1px solid #999; background: #f6f6f8; border-radius: 2px; display: grid; place-items: center; }
.mini button svg { width: 12px; height: 12px; }
.view { position: relative; flex: 1; min-width: 0; overflow: hidden; background: #fff; border-right: 1px solid #ccc; }

/* trees */
.tree { flex: 1; min-height: 0; overflow: hidden; background: #fff; border: 1px solid #828790; padding: 1px 0 0 4px; }
.tree ul { padding-left: 24px; }
.tree li { position: relative; }
.tree li::before { content: ""; position: absolute; left: 12px; top: 0; bottom: 0; border-left: 1px dotted #888; }
.tree li:last-child::before { bottom: auto; height: 10px; }
.layers .tree > li::before { display: none; }
.row { position: relative; display: flex; align-items: center; height: 20px; padding-left: 24px; white-space: nowrap; }
.row::before { content: ""; position: absolute; left: 13px; top: 10px; width: 12px; border-top: 1px dotted #888; }
.row label { display: flex; align-items: center; }
.row span { padding: 0 3px; margin-left: 3px; height: 20px; }
.row .sel { background: #0078d7; color: #fff; }
.ex {
  position: absolute; left: 7px; top: 5px; width: 11px; height: 11px;
  border: 1px solid #919191; background: #f8f8f8; color: #2a4a9e;
  font: bold 12px/9px "Liberation Mono", monospace; z-index: 1;
}
.tree input { appearance: none; width: 16px; height: 16px; margin: 0 2px 0 1px; border: 2px solid #444; background: #fff; }
.tree input:checked::after { content: ""; display: block; width: 5px; height: 9px; margin: 0 0 0 3px; border: solid #444; border-width: 0 2px 2px 0; transform: rotate(40deg); }
.sw { width: 17px; height: 12px; margin: 0 4px 0 3px; border: 2px solid #ccc; border-radius: 2px; background: currentColor; }
.sw.k { color: #000; } .sw.r, .reg.r { color: #f00; } .sw.g, .reg.g { color: #008b00; } .sw.b, .reg.b { color: #00f; } .sw.y, .reg.y { color: #ff0; }
.sw + span { margin-left: 0; }
.reg text { font: 8px "Liberation Sans", sans-serif; fill: #222; }
.act { background: #2cc4c4; }
.bandrow span { border-left: 3px solid #f00; height: 16px; line-height: 16px; margin-left: -2px; padding-left: 5px; }
.bandrow.r svg { color: #e00; } .bandrow.g svg { color: #0d0; } .bandrow.b svg { color: #00d; }
.bandrow.g span { border-color: #b4f000; } .bandrow.b span { border-color: #0ff; }

/* toolbox */
.search { display: flex; align-items: center; gap: 7px; padding: 7px 0 4px 4px; }
.search input { flex: 1; min-width: 0; height: 28px; border: 2px solid #7a7a7a; border-width: 1px 2px 2px 1px; background: #fff; }
.search svg { margin-right: 8px; color: #3d4650; }
.where { flex: none; width: 100%; height: 25px; border: 1px solid #999; border-right: 0; border-bottom-width: 2px; background: #f0f0f0; padding: 0 2px 2px; }
.toolbox .mini { padding: 8px 5px 9px; }
.toolbox h2 { border-top-color: #ddd; }
.toolbox .tree { border-right: 0; padding-top: 2px; margin-bottom: 2px; }
.st { margin: -1px -2px -3px 0; }
.st.first { margin-left: 14px; }

/* display */
.map { position: absolute; left: 249px; top: 6px; width: 756px; height: 806px; }
.compass { position: absolute; left: 1142px; top: 48px; width: 20px; height: 40px; }

/* dialog */
.dialog { position: absolute; left: 332px; top: 31px; width: 345px; padding: 0 4px 8px; background: #f0f0f0; box-shadow: 0 0 0 1px #444, 3px 4px 14px rgba(0, 0, 0, .6); }
.dialog header { display: flex; align-items: center; gap: 5px; height: 31px; margin: 0 -4px 5px; padding: 0 14px 0 4px; background: #fff; font: 15px/20px "Noto Sans", sans-serif; }
.dialog header button { margin-left: auto; }
.dialog header button svg { width: 13px; height: 13px; }
fieldset { margin: 0 0 2px; padding: 0 4px; border: 1px solid #777; min-width: 0; }
.f1 { height: 233px; padding-top: 7px; }
.f1 > label { display: block; padding-left: 3px; }
#cl { display: block; width: 312px; height: 122px; margin: 2px 0 6px; border: 1px solid #777; background: #fff; padding: 0; overflow: hidden; outline: 0; }
#cl option { padding: 0 2px; min-height: 15px; height: 15px; line-height: 16px; }
#cl option:checked { background: #0078d7 linear-gradient(#0078d7, #0078d7); color: #fff; }
.line { display: flex; align-items: center; }
.line input:not([type]), .path { border: 1px solid #777; background: #f0f0f0; padding: 0 2px 4px; }
.f1 .line { padding-left: 3px; }
.count { width: 54px; height: 29px; }
.f1 .btns { gap: 5px; padding-left: 5px; margin-top: 11px; }
.dialog .line button, .okbox button { height: 24px; background: #e1e1e1; border: 1px solid #adadad; }
.btns button:first-child { width: 140px; }
.btns button:last-child { width: 132px; }
.f2 { height: 172px; padding-top: 7px; }
.out { padding-left: 3px; gap: 3px; }
.out label { width: 45px; }
#o { width: 155px; height: 28px; }
.dialog .out button { width: 25px; height: 25px; display: grid; place-items: center; }
.out button svg { width: 18px; height: 16px; }
.res { margin-top: 20px; padding-left: 7px; height: 20px; }
.res label { display: flex; align-items: center; gap: 3px; }
.res span + label { margin-left: 1px; }
.res .mem { margin-left: 25px; }
.res input { appearance: none; width: 17px; height: 17px; border: 1px solid #333; border-radius: 50%; background: #fff; }
.res input:checked { background: radial-gradient(#333 0 4px, #fff 5px); }
.fn { margin-top: 22px; padding-left: 11px; }
.fn button { width: 62px; }
#f.path { width: 313px; height: 29px; margin: 8px 0 0 7px; background: #fff; }
.okbox { display: flex; gap: 5px; width: 148px; padding: 5px; margin: 5px 0 0 4px; border: 1px solid #777; }
.okbox button { width: 65px; }

/* status bar */
.status { position: relative; display: flex; gap: 5px; height: 35px; padding: 2px 5px 3px 4px; }
.cell { flex: 1; border: 2px solid #999; border-color: #888 #999 #999 #888; }
.cell.task { flex: none; width: 150px; display: flex; justify-content: flex-end; align-items: center; }
.cell.task button { border-left: 1px dotted #777; padding-left: 4px; }
.cell.grip { flex: none; width: 22px; display: grid; place-items: center; margin-left: -3px; }
.cell svg { width: 18px; height: 18px; }
.mark { position: absolute; right: 10px; bottom: 8px; font: 15px/20px "Liberation Sans", sans-serif; color: rgba(255, 255, 255, .8); text-shadow: 0 0 1px #999; }
```
